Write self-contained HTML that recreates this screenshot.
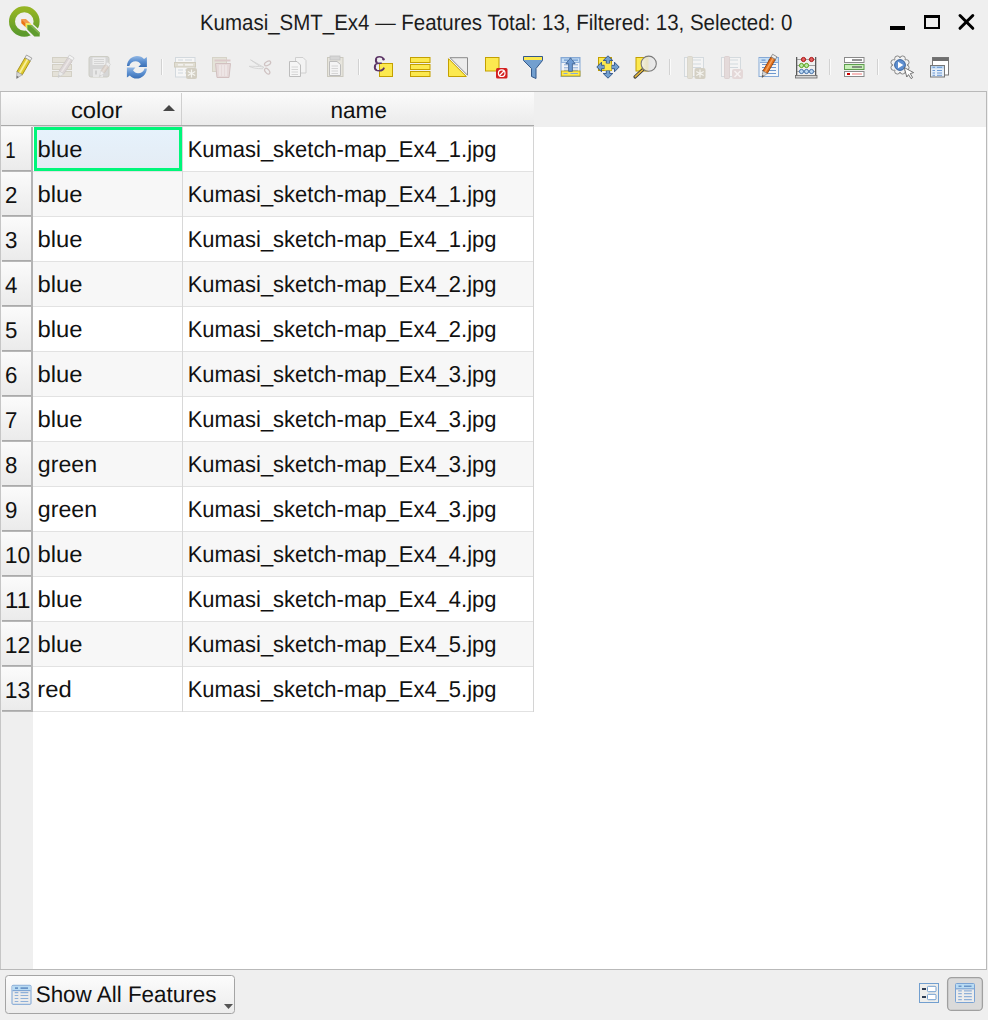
<!DOCTYPE html>
<html><head><meta charset="utf-8"><title>Attribute table</title>
<style>
html,body{margin:0;padding:0;background:#efefef;}
body{width:988px;height:1020px;overflow:hidden;}
svg{display:block;font-family:"Liberation Sans", sans-serif;text-rendering:geometricPrecision;}
</style></head><body>
<svg width="988" height="1020" viewBox="0 0 988 1020">
<rect width="988" height="1020" fill="#efefef"/>

<defs>
<linearGradient id="lg_ring" x1="0" y1="0" x2="0" y2="1"><stop offset="0" stop-color="#95b524"/><stop offset="1" stop-color="#5c9a2c"/></linearGradient>
<linearGradient id="lg_bar" x1="0" y1="0" x2="1" y2="1"><stop offset="0" stop-color="#86b850"/><stop offset="1" stop-color="#5e9a2f"/></linearGradient>
<linearGradient id="hdr" x1="0" y1="0" x2="0" y2="1"><stop offset="0" stop-color="#fbfbfb"/><stop offset="1" stop-color="#ebebeb"/></linearGradient>
<linearGradient id="btn" x1="0" y1="0" x2="0" y2="1"><stop offset="0" stop-color="#fcfcfc"/><stop offset="1" stop-color="#ececec"/></linearGradient>
<linearGradient id="sel" x1="0" y1="0" x2="0" y2="1"><stop offset="0" stop-color="#e6f2fc"/><stop offset="1" stop-color="#e4ecf4"/></linearGradient>
</defs>
<g>
<circle cx="24.3" cy="21.5" r="12.3" fill="none" stroke="url(#lg_ring)" stroke-width="6"/>
<polygon points="25.8,30.2 26,23.5 32.4,23.5 41.5,31.8 41.5,38.5 33.6,38.5" fill="#efefef"/>
<polygon points="21.3,19 25.9,19 30.5,23.2 25.7,23.2" fill="#f29a4a"/>
<polygon points="21.3,19 25.7,23.2 25.7,27.2 21.3,23.2" fill="#ea7414"/>
<polygon points="25.7,23.2 30.5,23.2 31.8,25 27.3,25 27.3,29.2 25.7,27.2" fill="#eee84e"/>
<polygon points="27.3,25 31.8,25 39.7,32.4 39.7,36.6 34.4,36.6 27.3,29.5" fill="#5f9c2e"/>
<polygon points="27.3,25 31.8,25 39.7,32.4 39.7,34.5 30,25.8" fill="#80b34e"/>
</g>

<text x="199.97" y="30" font-size="22.2" textLength="592.36" lengthAdjust="spacingAndGlyphs" fill="#1c1c1c">Kumasi_SMT_Ex4 — Features Total: 13, Filtered: 13, Selected: 0</text>
<rect x="890" y="26" width="15" height="4" fill="#000"/>
<path d="M925 16 H939 V28 H925 Z" fill="none" stroke="#000" stroke-width="2"/><rect x="924" y="15" width="16" height="3" fill="#000"/>
<path d="M960 15.5 L972.8 28.3 M972.8 15.5 L960 28.3" stroke="#000" stroke-width="3" stroke-linecap="round"/>
<g transform="translate(22.9,67.5) rotate(30)" opacity="1">
<rect x="-3.1" y="-9.6" width="6.2" height="16.2" fill="#e0cb30" stroke="#a08a10" stroke-width="0.8"/>
<rect x="-1.0333333333333334" y="-9.6" width="1.8599999999999999" height="16.2" fill="#f7ef9a"/>
<rect x="-3.1" y="-12.6" width="6.2" height="3" fill="#f0f0f0" stroke="#9a9a9a" stroke-width="0.8"/>
<polygon points="-3.1,6.6 3.1,6.6 0,12.6" fill="#d8d8d8" stroke="#9a9a9a" stroke-width="0.6"/>
<polygon points="-1.24,10.2 1.24,10.2 0,12.6" fill="#6f6f6f"/>
</g>
<rect x="52.5" y="57.5" width="19" height="5.0" fill="#e4e1d8" stroke="#d3d0c5"/>
<rect x="52.5" y="64.5" width="19" height="5.0" fill="#e4e1d8" stroke="#d3d0c5"/>
<rect x="52.5" y="71.5" width="19" height="5.0" fill="#e4e1d8" stroke="#d3d0c5"/>
<g transform="translate(65,67) rotate(33)" opacity="1">
<rect x="-2.75" y="-9.5" width="5.5" height="16.0" fill="#dcd6d6" stroke="#cfc8c8" stroke-width="0.8"/>
<rect x="-0.9166666666666666" y="-9.5" width="1.65" height="16.0" fill="#ebe6e6"/>
<rect x="-2.75" y="-12.5" width="5.5" height="3" fill="#f4f4f4" stroke="#d0d0d0" stroke-width="0.8"/>
<polygon points="-2.75,6.5 2.75,6.5 0,12.5" fill="#ececec" stroke="#d0d0d0" stroke-width="0.6"/>
<polygon points="-1.1,10.1 1.1,10.1 0,12.5" fill="#c8c8c8"/>
</g>
<rect x="89" y="56.5" width="20" height="20.5" rx="2" fill="#d6d6d6" stroke="#cdcdc4"/>
<rect x="92.5" y="57.5" width="13" height="7.5" fill="#ececec"/>
<path d="M94 59.5H104M94 61.5H104M94 63.5H104" stroke="#cfcfcf" stroke-width="0.8"/>
<rect x="93" y="69" width="10" height="8" fill="#e8e8e8"/><rect x="95" y="70.5" width="2" height="4" fill="#cfcfcf"/>
<g transform="translate(104,70) rotate(35)" opacity="1">
<rect x="-2.0" y="-5.5" width="4" height="8.0" fill="#dcd3cc" stroke="#d0c6be" stroke-width="0.8"/>
<rect x="-0.6666666666666666" y="-5.5" width="1.2" height="8.0" fill="#e6ded8"/>
<rect x="-2.0" y="-8.5" width="4" height="3" fill="#eee" stroke="#d6d6d6" stroke-width="0.8"/>
<polygon points="-2.0,2.5 2.0,2.5 0,8.5" fill="#eee" stroke="#d6d6d6" stroke-width="0.6"/>
<polygon points="-0.8,6.1 0.8,6.1 0,8.5" fill="#d0d0d0"/>
</g>
<defs><linearGradient id="rl" x1="0" y1="0" x2="0" y2="1"><stop offset="0" stop-color="#93b8e4"/><stop offset="0.5" stop-color="#5b8fd0"/><stop offset="1" stop-color="#3a6fb5"/></linearGradient></defs>
<g transform="translate(122,52)" fill="url(#rl)">
<path d="M4.9,14 C5.3,7.5 10.5,3.9 15,3.9 C18,3.9 20.5,5 22,7 L24.9,5 L24.9,14.9 L16.4,14.9 L18.8,12.2 C17.5,10.2 15.8,9.2 13.8,9.2 C10.5,9.2 8,11 7.3,14 Z"/>
<path d="M24.9,16.4 C24.5,22.9 19.3,26.5 14.8,26.5 C11.8,26.5 9.3,25.4 7.8,23.4 L4.9,25.4 L4.9,15.5 L13.4,15.5 L11,18.2 C12.3,20.2 14,21.2 16,21.2 C19.3,21.2 21.8,19.4 22.5,16.4 Z"/>
</g>
<rect x="161" y="59" width="1" height="16" fill="#d2d2d2" shape-rendering="crispEdges"/><rect x="162" y="59" width="1" height="16" fill="#fbfbfb" shape-rendering="crispEdges"/>
<rect x="175.5" y="57.5" width="19.5" height="19.5" fill="#f6f6f6" stroke="#d3d9de"/>
<path d="M178 60H183M185 60H192M178 70H183M185 70H191M178 73H183M185 73H191" stroke="#d0d8de" stroke-width="1.2"/>
<rect x="174.5" y="62.5" width="21" height="4.5" fill="#e0ddd2" stroke="#d0ccbe"/>
<path d="M178 64.8H183M185 64.8H193" stroke="#f8f8f8" stroke-width="1.2"/>
<rect x="186" y="68" width="11" height="11" rx="2" fill="#d2cec2"/>
<path d="M191.5 69.5V77.5M187.8 71.5L195.2 75.5M195.2 71.5L187.8 75.5" stroke="#f4f4f0" stroke-width="1.2"/>
<rect x="212.5" y="57.5" width="14" height="14" fill="#e4e2d8" stroke="#d6d3c8"/>
<rect x="214.5" y="59.5" width="16" height="2" fill="#dcc9c9"/>
<path d="M215.5 63.5H230.5L229 77.5H217Z" fill="#e6dada" stroke="#d2c0c0"/>
<path d="M220 65V76M223 65V76M226 65V76" stroke="#f1ecec" stroke-width="1.3"/>
<path d="M250.5 59.8 L263.5 67.2 L262.5 68.2 Z" fill="#f2f2f2" stroke="#d2d2d2" stroke-width="0.9" stroke-linejoin="round"/>
<path d="M249.2 66.3 C253 66.3 258 66.3 263.5 67 L262.5 68.8 C257 68.6 252 68 249.2 66.3 Z" fill="#f2f2f2" stroke="#d2d2d2" stroke-width="0.9" stroke-linejoin="round"/>
<ellipse cx="267.6" cy="63.4" rx="3.4" ry="1.9" transform="rotate(-30 267.6 63.4)" fill="none" stroke="#cfc2c2" stroke-width="1.2"/>
<ellipse cx="267.2" cy="71.2" rx="3.4" ry="1.9" transform="rotate(50 267.2 71.2)" fill="none" stroke="#cfc2c2" stroke-width="1.2"/>
<path d="M295.5 57.5H303L306 60.5V73H295.5Z" fill="#f3f3f3" stroke="#cfcfcf"/>
<path d="M289.5 61.5H297L300.5 65V76.5H289.5Z" fill="#f5f5f5" stroke="#bdbdbd"/>
<path d="M291.5 67H298M291.5 69.5H298M291.5 72H298M291.5 74.5H298" stroke="#cdcdcd" stroke-width="0.8"/>
<rect x="327.5" y="57.5" width="15.5" height="19" fill="#e7e5dd" stroke="#cbc9bf"/>
<rect x="330" y="56" width="10" height="4" fill="#d6d6d6" stroke="#c4c4c4" stroke-width="0.8"/>
<path d="M329.5 61.5H337L340.5 64.5V75.5H329.5Z" fill="#f4f4f4" stroke="#bcbcbc"/>
<path d="M331.5 66H338M331.5 68.5H338M331.5 71H338M331.5 73.5H338" stroke="#cdcdcd" stroke-width="0.8"/>
<rect x="358" y="59" width="1" height="16" fill="#d2d2d2" shape-rendering="crispEdges"/><rect x="359" y="59" width="1" height="16" fill="#fbfbfb" shape-rendering="crispEdges"/>
<rect x="379.5" y="63.5" width="13" height="13" fill="#fce94f" stroke="#c4a000"/>
<path d="M383.6 59.2 C382.8 57.4 381.2 56.8 379.6 56.8 C377 56.8 375.7 58.5 375.7 60.4 C375.7 62.3 377.2 63.3 379.2 63.3 L381.8 63.3 M379.2 63.3 C376.2 63.3 374.6 65.1 374.6 67.2 C374.6 69.6 376.7 70.8 379.4 70.8 C381.7 70.8 383.4 69.7 384.2 67.6" fill="none" stroke="#5c3566" stroke-width="1.6"/>
<path d="M376.6 58.6 C375.9 59.6 375.9 61.4 377 62.4 M375.6 65.2 C374.8 66.6 375 68.8 376.4 69.8" fill="none" stroke="#5c3566" stroke-width="1.6"/>
<circle cx="383.5" cy="59.2" r="1.2" fill="#5c3566"/>
<rect x="410.5" y="57.5" width="19.5" height="5.0" fill="#fce94f" stroke="#c4a000"/>
<rect x="410.5" y="64.5" width="19.5" height="5.0" fill="#fce94f" stroke="#c4a000"/>
<rect x="410.5" y="71.5" width="19.5" height="5.0" fill="#fce94f" stroke="#c4a000"/>
<polygon points="450,57.7 467.5,57.7 467.5,75.2" fill="#ececec" stroke="#8a8a8a" stroke-linejoin="round"/>
<polygon points="448.5,58.7 448.5,76.5 466.3,76.5" fill="#fce94f" stroke="#c4a000" stroke-linejoin="round"/>
<rect x="485.5" y="57.5" width="13.5" height="13.5" fill="#fce94f" stroke="#c4a000"/>
<rect x="496" y="68" width="11.5" height="10.5" rx="1.5" fill="#d42020"/>
<circle cx="501.7" cy="73.2" r="3.3" fill="none" stroke="#fff" stroke-width="1.2"/><path d="M499.5 75.5L504 71" stroke="#fff" stroke-width="1.2"/>
<path d="M523.5 56.5H542.5V60.5L536 68.5V78.5L531.5 76.5V68.5L523.5 60.5Z" fill="#729fcf" stroke="#34598a" stroke-width="1"/>
<rect x="524" y="57" width="18" height="3" fill="#fce94f"/>
<rect x="561" y="57.5" width="19" height="19" fill="#f2f4f7" stroke="#86a9d6"/>
<rect x="561.5" y="58" width="18" height="4.5" fill="#c6dff5" stroke="#86a9d6" stroke-width="0.8"/>
<path d="M564 60.2H568M573 60.2H578" stroke="#6d98cf" stroke-width="1.3"/>
<path d="M564 64.8H568M573 64.8H578M564 67.8H568M573 67.8H578M564 70.3H568M573 70.3H578" stroke="#86a9d6" stroke-width="1"/>
<rect x="561.5" y="71" width="18.5" height="5" fill="#fce94f" stroke="#c4a000" stroke-width="0.8"/>
<path d="M563.5 73.5H567.5M570.5 73.5H578" stroke="#86a9d6" stroke-width="1"/>
<path d="M570.5 57.8L575.1 63.7H572.4V71.3H568.6V63.7H565.9Z" fill="#6d9ad2" stroke="#34598a" stroke-width="0.8" stroke-linejoin="round"/>
<rect x="598.5" y="57.5" width="13" height="13" fill="#fce94f" stroke="#c4a000"/>
<polygon points="608,55.8 612.8,60.5 609.7,60.5 609.7,63.6 606.3,63.6 606.3,60.5 603.2,60.5" fill="#729fcf" stroke="#2d5186" stroke-width="0.9" stroke-linejoin="round"/>
<polygon points="608,78.2 612.8,73.5 609.7,73.5 609.7,70.4 606.3,70.4 606.3,73.5 603.2,73.5" fill="#729fcf" stroke="#2d5186" stroke-width="0.9" stroke-linejoin="round"/>
<polygon points="596.8,67 601.5,62.2 601.5,65.3 604.6,65.3 604.6,68.7 601.5,68.7 601.5,71.8" fill="#729fcf" stroke="#2d5186" stroke-width="0.9" stroke-linejoin="round"/>
<polygon points="619.2,67 614.5,62.2 614.5,65.3 611.4,65.3 611.4,68.7 614.5,68.7 614.5,71.8" fill="#729fcf" stroke="#2d5186" stroke-width="0.9" stroke-linejoin="round"/>
<rect x="604.6" y="63.6" width="6.8" height="6.8" fill="#fce94f"/>
<rect x="636" y="57.5" width="12" height="13.5" fill="#fce94f" stroke="#c4a000"/>
<path d="M643 69.5L635 77" stroke="#3a3a3a" stroke-width="3.2" stroke-linecap="round"/><path d="M642.5 70L635.3 76.7" stroke="#e6b83c" stroke-width="1.6" stroke-linecap="round"/>
<defs><linearGradient id="mg" x1="0" y1="0" x2="1" y2="0"><stop offset="0" stop-color="#f3f1e4"/><stop offset="0.4" stop-color="#e8e2c4"/><stop offset="0.55" stop-color="#e6e6e6"/><stop offset="1" stop-color="#ebebeb"/></linearGradient></defs>
<circle cx="648.7" cy="63.7" r="7.6" fill="url(#mg)" stroke="#7a7a7a" stroke-width="1.1"/>
<rect x="669" y="59" width="1" height="16" fill="#d2d2d2" shape-rendering="crispEdges"/><rect x="670" y="59" width="1" height="16" fill="#fbfbfb" shape-rendering="crispEdges"/>
<rect x="684.5" y="57.5" width="19" height="19" fill="#f4f4f4" stroke="#d4dade"/>
<path d="M693 60H701M693 64H701M693 67.5H701" stroke="#d2d9de" stroke-width="1.2"/>
<rect x="687.5" y="56.5" width="5" height="22" rx="1" fill="#e2dfd4" stroke="#d6d2c6" stroke-width="0.8"/>
<rect x="694.5" y="68" width="11" height="11" rx="2" fill="#d4d0c4"/>
<path d="M700 69.5V77.5M696.3 71.5L703.7 75.5M703.7 71.5L696.3 75.5" stroke="#f4f4f0" stroke-width="1.2"/>
<rect x="721.5" y="57.5" width="19" height="19" fill="#f4f4f4" stroke="#d4dade"/>
<path d="M730 60H738M730 64H738M730 67.5H738" stroke="#d2d9de" stroke-width="1.2"/>
<rect x="724.5" y="56.5" width="5" height="22" rx="1" fill="#e4dada" stroke="#d8cccc" stroke-width="0.8"/>
<rect x="732" y="69" width="11" height="10" rx="2" fill="#e4d8d8"/>
<path d="M734.5 71L740.5 77M740.5 71L734.5 77" stroke="#f6f2f2" stroke-width="1.5"/>
<rect x="759" y="57.5" width="19.5" height="19" fill="#f4f6f8" stroke="#86a9d6"/>
<rect x="759.5" y="58" width="18.5" height="4" fill="#c6dff5"/>
<path d="M760 62.5H778" stroke="#86a9d6" stroke-width="1"/>
<path d="M761.5 60.2H765.5M768 60.2H776" stroke="#6d98cf" stroke-width="1.3"/>
<path d="M762 64.5H776M762 67.5H776M762 70.5H776M762 73.5H776" stroke="#6d98cf" stroke-width="1"/>
<g transform="translate(768.4,66.5) rotate(30)" opacity="1">
<rect x="-2.5" y="-9.7" width="5" height="16.4" fill="#e2701c" stroke="#8f3f08" stroke-width="0.8"/>
<rect x="-0.8333333333333334" y="-9.7" width="1.5" height="16.4" fill="#f7a055"/>
<rect x="-2.5" y="-12.7" width="5" height="3" fill="#eeeeee" stroke="#888" stroke-width="0.8"/>
<polygon points="-2.5,6.699999999999999 2.5,6.699999999999999 0,12.7" fill="#d8d8d8" stroke="#888" stroke-width="0.6"/>
<polygon points="-1.0,10.299999999999999 1.0,10.299999999999999 0,12.7" fill="#444"/>
</g>
<rect x="796" y="57" width="1.3" height="19" fill="#5a5a5a"/><rect x="815" y="57" width="1.3" height="19" fill="#5a5a5a"/>
<rect x="795.5" y="75.5" width="21.5" height="2.5" fill="#d4d4d4" stroke="#6a6a6a" stroke-width="0.8"/>
<path d="M797 59.5H815M797 65.5H815M797 71.5H815" stroke="#8a8a8a" stroke-width="0.8"/>
<circle cx="803.5" cy="59.5" r="2.1" fill="#e06060" stroke="#a40000" stroke-width="0.9"/>
<circle cx="811.5" cy="59.5" r="2.1" fill="#e06060" stroke="#a40000" stroke-width="0.9"/>
<circle cx="801.5" cy="65.5" r="2.1" fill="#b8eaa8" stroke="#4e9a06" stroke-width="0.9"/>
<circle cx="806.5" cy="65.5" r="2.1" fill="#b8eaa8" stroke="#4e9a06" stroke-width="0.9"/>
<circle cx="801.5" cy="71.5" r="2.1" fill="#bcd8f2" stroke="#3465a4" stroke-width="0.9"/>
<circle cx="806.5" cy="71.5" r="2.1" fill="#bcd8f2" stroke="#3465a4" stroke-width="0.9"/>
<circle cx="811.5" cy="71.5" r="2.1" fill="#bcd8f2" stroke="#3465a4" stroke-width="0.9"/>
<rect x="829" y="59" width="1" height="16" fill="#d2d2d2" shape-rendering="crispEdges"/><rect x="830" y="59" width="1" height="16" fill="#fbfbfb" shape-rendering="crispEdges"/>
<rect x="844.5" y="57.5" width="19.5" height="5" fill="#fff" stroke="#8a8a8a"/><path d="M852 60H862" stroke="#666" stroke-width="1.4"/>
<rect x="844.5" y="64.5" width="19.5" height="5" fill="#c8f0b8" stroke="#5e9e4e"/><path d="M852 67H862" stroke="#666" stroke-width="1.4"/>
<rect x="844.5" y="71.5" width="19.5" height="5" fill="#fff" stroke="#8a8a8a"/><rect x="847" y="73" width="3" height="2" fill="#c00"/><path d="M852 74H862" stroke="#f4a0a0" stroke-width="1.4"/>
<rect x="877" y="59" width="1" height="16" fill="#d2d2d2" shape-rendering="crispEdges"/><rect x="878" y="59" width="1" height="16" fill="#fbfbfb" shape-rendering="crispEdges"/>
<circle cx="906.37" cy="67.64" r="2.7" fill="#f2f2f2" stroke="#7a7a7a" stroke-width="0.9"/><circle cx="902.64" cy="71.37" r="2.7" fill="#f2f2f2" stroke="#7a7a7a" stroke-width="0.9"/><circle cx="897.36" cy="71.37" r="2.7" fill="#f2f2f2" stroke="#7a7a7a" stroke-width="0.9"/><circle cx="893.63" cy="67.64" r="2.7" fill="#f2f2f2" stroke="#7a7a7a" stroke-width="0.9"/><circle cx="893.63" cy="62.36" r="2.7" fill="#f2f2f2" stroke="#7a7a7a" stroke-width="0.9"/><circle cx="897.36" cy="58.63" r="2.7" fill="#f2f2f2" stroke="#7a7a7a" stroke-width="0.9"/><circle cx="902.64" cy="58.63" r="2.7" fill="#f2f2f2" stroke="#7a7a7a" stroke-width="0.9"/><circle cx="906.37" cy="62.36" r="2.7" fill="#f2f2f2" stroke="#7a7a7a" stroke-width="0.9"/>
<circle cx="900" cy="65" r="7" fill="#f2f2f2"/>
<circle cx="900" cy="65" r="5.4" fill="#5f8fd0" stroke="#2f5a95" stroke-width="0.9"/>
<polygon points="898,61.8 898,68.2 903.3,65" fill="#fff"/>
<path d="M904.2 67.5 L906.8 77 L908.5 74.6 L911 78.6 L912.6 77.6 L910.3 73.6 L913.6 72.6 Z" fill="#fff" stroke="#555" stroke-width="0.8" stroke-linejoin="round"/>
<rect x="932.5" y="57.5" width="16" height="17.5" fill="#fff" stroke="#7a7a7a"/>
<rect x="932.5" y="57.5" width="16" height="3.5" fill="#6f6f6f"/>
<rect x="930.5" y="65.5" width="14" height="11.5" fill="#e4eef9" stroke="#777"/>
<rect x="931" y="66" width="13" height="2.5" fill="#bcd6f0"/>
<path d="M932.5 67.3H935M937 67.3H942M932.5 70.5H935M937 70.5H942M932.5 73H935M937 73H942M932.5 75.3H935M937 75.3H942" stroke="#5d8fcf" stroke-width="0.9"/>
<rect x="0.5" y="91.5" width="986" height="878" fill="#fff" stroke="#b9b9b9" shape-rendering="crispEdges"/><rect x="0" y="92" width="1" height="877" fill="#c6c6c6" shape-rendering="crispEdges"/>
<rect x="1" y="92" width="985" height="34" fill="#efefef" shape-rendering="crispEdges"/>
<rect x="1" y="92" width="533" height="33" fill="url(#hdr)" shape-rendering="crispEdges"/>
<rect x="1" y="125" width="533" height="1" fill="#a9a9a9" shape-rendering="crispEdges"/>
<rect x="1" y="126" width="533" height="1" fill="#d8d8d8" shape-rendering="crispEdges"/>
<rect x="181" y="93" width="1" height="32" fill="#cfcfcf" shape-rendering="crispEdges"/>
<polygon points="163,111 175,111 169,105" fill="#474747"/>
<text x="70.93" y="118" font-size="23" fill="#111" textLength="51.62" lengthAdjust="spacingAndGlyphs">color</text>
<text x="330.56" y="118" font-size="23" fill="#111" textLength="56.39" lengthAdjust="spacingAndGlyphs">name</text>
<rect x="1" y="126" width="32" height="843" fill="#efefef" shape-rendering="crispEdges"/>
<rect x="534" y="92" width="452" height="35" fill="#efefef" shape-rendering="crispEdges"/>
<rect x="33" y="127" width="500" height="45" fill="#ffffff" shape-rendering="crispEdges"/>
<rect x="1" y="127" width="31" height="43" fill="url(#hdr)" shape-rendering="crispEdges"/>
<rect x="2" y="170" width="31" height="1" fill="#aaaaaa" shape-rendering="crispEdges"/>
<rect x="2" y="171" width="31" height="1" fill="#b8b8b8" shape-rendering="crispEdges"/>
<rect x="31" y="127" width="2" height="45" fill="#b4b4b4" shape-rendering="crispEdges"/>
<rect x="33" y="171" width="500" height="1" fill="#e2e2e2" shape-rendering="crispEdges"/>
<text x="5.18" y="158" font-size="23" fill="#111" textLength="10.39" lengthAdjust="spacingAndGlyphs">1</text>
<text x="187.71" y="157" font-size="23" fill="#111" textLength="308.74" lengthAdjust="spacingAndGlyphs">Kumasi_sketch-map_Ex4_1.jpg</text>
<rect x="33" y="172" width="500" height="45" fill="#f7f7f7" shape-rendering="crispEdges"/>
<rect x="1" y="172" width="31" height="43" fill="url(#hdr)" shape-rendering="crispEdges"/>
<rect x="2" y="215" width="31" height="1" fill="#aaaaaa" shape-rendering="crispEdges"/>
<rect x="2" y="216" width="31" height="1" fill="#b8b8b8" shape-rendering="crispEdges"/>
<rect x="31" y="172" width="2" height="45" fill="#b4b4b4" shape-rendering="crispEdges"/>
<rect x="33" y="216" width="500" height="1" fill="#e2e2e2" shape-rendering="crispEdges"/>
<text x="5.0" y="203" font-size="23" fill="#111" textLength="12.4" lengthAdjust="spacingAndGlyphs">2</text>
<text x="37.42" y="202" font-size="23" fill="#111" textLength="45.02" lengthAdjust="spacingAndGlyphs">blue</text>
<text x="187.71" y="202" font-size="23" fill="#111" textLength="308.74" lengthAdjust="spacingAndGlyphs">Kumasi_sketch-map_Ex4_1.jpg</text>
<rect x="33" y="217" width="500" height="45" fill="#ffffff" shape-rendering="crispEdges"/>
<rect x="1" y="217" width="31" height="43" fill="url(#hdr)" shape-rendering="crispEdges"/>
<rect x="2" y="260" width="31" height="1" fill="#aaaaaa" shape-rendering="crispEdges"/>
<rect x="2" y="261" width="31" height="1" fill="#b8b8b8" shape-rendering="crispEdges"/>
<rect x="31" y="217" width="2" height="45" fill="#b4b4b4" shape-rendering="crispEdges"/>
<rect x="33" y="261" width="500" height="1" fill="#e2e2e2" shape-rendering="crispEdges"/>
<text x="5.0" y="248" font-size="23" fill="#111" textLength="12.4" lengthAdjust="spacingAndGlyphs">3</text>
<text x="37.42" y="247" font-size="23" fill="#111" textLength="45.02" lengthAdjust="spacingAndGlyphs">blue</text>
<text x="187.71" y="247" font-size="23" fill="#111" textLength="308.74" lengthAdjust="spacingAndGlyphs">Kumasi_sketch-map_Ex4_1.jpg</text>
<rect x="33" y="262" width="500" height="45" fill="#f7f7f7" shape-rendering="crispEdges"/>
<rect x="1" y="262" width="31" height="43" fill="url(#hdr)" shape-rendering="crispEdges"/>
<rect x="2" y="305" width="31" height="1" fill="#aaaaaa" shape-rendering="crispEdges"/>
<rect x="2" y="306" width="31" height="1" fill="#b8b8b8" shape-rendering="crispEdges"/>
<rect x="31" y="262" width="2" height="45" fill="#b4b4b4" shape-rendering="crispEdges"/>
<rect x="33" y="306" width="500" height="1" fill="#e2e2e2" shape-rendering="crispEdges"/>
<text x="5.0" y="293" font-size="23" fill="#111" textLength="12.4" lengthAdjust="spacingAndGlyphs">4</text>
<text x="37.42" y="292" font-size="23" fill="#111" textLength="45.02" lengthAdjust="spacingAndGlyphs">blue</text>
<text x="187.71" y="292" font-size="23" fill="#111" textLength="308.74" lengthAdjust="spacingAndGlyphs">Kumasi_sketch-map_Ex4_2.jpg</text>
<rect x="33" y="307" width="500" height="45" fill="#ffffff" shape-rendering="crispEdges"/>
<rect x="1" y="307" width="31" height="43" fill="url(#hdr)" shape-rendering="crispEdges"/>
<rect x="2" y="350" width="31" height="1" fill="#aaaaaa" shape-rendering="crispEdges"/>
<rect x="2" y="351" width="31" height="1" fill="#b8b8b8" shape-rendering="crispEdges"/>
<rect x="31" y="307" width="2" height="45" fill="#b4b4b4" shape-rendering="crispEdges"/>
<rect x="33" y="351" width="500" height="1" fill="#e2e2e2" shape-rendering="crispEdges"/>
<text x="5.0" y="338" font-size="23" fill="#111" textLength="12.4" lengthAdjust="spacingAndGlyphs">5</text>
<text x="37.42" y="337" font-size="23" fill="#111" textLength="45.02" lengthAdjust="spacingAndGlyphs">blue</text>
<text x="187.71" y="337" font-size="23" fill="#111" textLength="308.74" lengthAdjust="spacingAndGlyphs">Kumasi_sketch-map_Ex4_2.jpg</text>
<rect x="33" y="352" width="500" height="45" fill="#f7f7f7" shape-rendering="crispEdges"/>
<rect x="1" y="352" width="31" height="43" fill="url(#hdr)" shape-rendering="crispEdges"/>
<rect x="2" y="395" width="31" height="1" fill="#aaaaaa" shape-rendering="crispEdges"/>
<rect x="2" y="396" width="31" height="1" fill="#b8b8b8" shape-rendering="crispEdges"/>
<rect x="31" y="352" width="2" height="45" fill="#b4b4b4" shape-rendering="crispEdges"/>
<rect x="33" y="396" width="500" height="1" fill="#e2e2e2" shape-rendering="crispEdges"/>
<text x="5.0" y="383" font-size="23" fill="#111" textLength="12.4" lengthAdjust="spacingAndGlyphs">6</text>
<text x="37.42" y="382" font-size="23" fill="#111" textLength="45.02" lengthAdjust="spacingAndGlyphs">blue</text>
<text x="187.71" y="382" font-size="23" fill="#111" textLength="308.74" lengthAdjust="spacingAndGlyphs">Kumasi_sketch-map_Ex4_3.jpg</text>
<rect x="33" y="397" width="500" height="45" fill="#ffffff" shape-rendering="crispEdges"/>
<rect x="1" y="397" width="31" height="43" fill="url(#hdr)" shape-rendering="crispEdges"/>
<rect x="2" y="440" width="31" height="1" fill="#aaaaaa" shape-rendering="crispEdges"/>
<rect x="2" y="441" width="31" height="1" fill="#b8b8b8" shape-rendering="crispEdges"/>
<rect x="31" y="397" width="2" height="45" fill="#b4b4b4" shape-rendering="crispEdges"/>
<rect x="33" y="441" width="500" height="1" fill="#e2e2e2" shape-rendering="crispEdges"/>
<text x="5.0" y="428" font-size="23" fill="#111" textLength="12.4" lengthAdjust="spacingAndGlyphs">7</text>
<text x="37.42" y="427" font-size="23" fill="#111" textLength="45.02" lengthAdjust="spacingAndGlyphs">blue</text>
<text x="187.71" y="427" font-size="23" fill="#111" textLength="308.74" lengthAdjust="spacingAndGlyphs">Kumasi_sketch-map_Ex4_3.jpg</text>
<rect x="33" y="442" width="500" height="45" fill="#f7f7f7" shape-rendering="crispEdges"/>
<rect x="1" y="442" width="31" height="43" fill="url(#hdr)" shape-rendering="crispEdges"/>
<rect x="2" y="485" width="31" height="1" fill="#aaaaaa" shape-rendering="crispEdges"/>
<rect x="2" y="486" width="31" height="1" fill="#b8b8b8" shape-rendering="crispEdges"/>
<rect x="31" y="442" width="2" height="45" fill="#b4b4b4" shape-rendering="crispEdges"/>
<rect x="33" y="486" width="500" height="1" fill="#e2e2e2" shape-rendering="crispEdges"/>
<text x="5.0" y="473" font-size="23" fill="#111" textLength="12.4" lengthAdjust="spacingAndGlyphs">8</text>
<text x="37.88" y="472" font-size="23" fill="#111" textLength="59.17" lengthAdjust="spacingAndGlyphs">green</text>
<text x="187.71" y="472" font-size="23" fill="#111" textLength="308.74" lengthAdjust="spacingAndGlyphs">Kumasi_sketch-map_Ex4_3.jpg</text>
<rect x="33" y="487" width="500" height="45" fill="#ffffff" shape-rendering="crispEdges"/>
<rect x="1" y="487" width="31" height="43" fill="url(#hdr)" shape-rendering="crispEdges"/>
<rect x="2" y="530" width="31" height="1" fill="#aaaaaa" shape-rendering="crispEdges"/>
<rect x="2" y="531" width="31" height="1" fill="#b8b8b8" shape-rendering="crispEdges"/>
<rect x="31" y="487" width="2" height="45" fill="#b4b4b4" shape-rendering="crispEdges"/>
<rect x="33" y="531" width="500" height="1" fill="#e2e2e2" shape-rendering="crispEdges"/>
<text x="5.0" y="518" font-size="23" fill="#111" textLength="12.4" lengthAdjust="spacingAndGlyphs">9</text>
<text x="37.88" y="517" font-size="23" fill="#111" textLength="59.17" lengthAdjust="spacingAndGlyphs">green</text>
<text x="187.71" y="517" font-size="23" fill="#111" textLength="308.74" lengthAdjust="spacingAndGlyphs">Kumasi_sketch-map_Ex4_3.jpg</text>
<rect x="33" y="532" width="500" height="45" fill="#f7f7f7" shape-rendering="crispEdges"/>
<rect x="1" y="532" width="31" height="43" fill="url(#hdr)" shape-rendering="crispEdges"/>
<rect x="2" y="575" width="31" height="1" fill="#aaaaaa" shape-rendering="crispEdges"/>
<rect x="2" y="576" width="31" height="1" fill="#b8b8b8" shape-rendering="crispEdges"/>
<rect x="31" y="532" width="2" height="45" fill="#b4b4b4" shape-rendering="crispEdges"/>
<rect x="33" y="576" width="500" height="1" fill="#e2e2e2" shape-rendering="crispEdges"/>
<text x="4.86" y="563" font-size="23" fill="#111" textLength="25.5" lengthAdjust="spacingAndGlyphs">10</text>
<text x="37.42" y="562" font-size="23" fill="#111" textLength="45.02" lengthAdjust="spacingAndGlyphs">blue</text>
<text x="187.71" y="562" font-size="23" fill="#111" textLength="308.74" lengthAdjust="spacingAndGlyphs">Kumasi_sketch-map_Ex4_4.jpg</text>
<rect x="33" y="577" width="500" height="45" fill="#ffffff" shape-rendering="crispEdges"/>
<rect x="1" y="577" width="31" height="43" fill="url(#hdr)" shape-rendering="crispEdges"/>
<rect x="2" y="620" width="31" height="1" fill="#aaaaaa" shape-rendering="crispEdges"/>
<rect x="2" y="621" width="31" height="1" fill="#b8b8b8" shape-rendering="crispEdges"/>
<rect x="31" y="577" width="2" height="45" fill="#b4b4b4" shape-rendering="crispEdges"/>
<rect x="33" y="621" width="500" height="1" fill="#e2e2e2" shape-rendering="crispEdges"/>
<text x="4.86" y="608" font-size="23" fill="#111" textLength="25.5" lengthAdjust="spacingAndGlyphs">11</text>
<text x="37.42" y="607" font-size="23" fill="#111" textLength="45.02" lengthAdjust="spacingAndGlyphs">blue</text>
<text x="187.71" y="607" font-size="23" fill="#111" textLength="308.74" lengthAdjust="spacingAndGlyphs">Kumasi_sketch-map_Ex4_4.jpg</text>
<rect x="33" y="622" width="500" height="45" fill="#f7f7f7" shape-rendering="crispEdges"/>
<rect x="1" y="622" width="31" height="43" fill="url(#hdr)" shape-rendering="crispEdges"/>
<rect x="2" y="665" width="31" height="1" fill="#aaaaaa" shape-rendering="crispEdges"/>
<rect x="2" y="666" width="31" height="1" fill="#b8b8b8" shape-rendering="crispEdges"/>
<rect x="31" y="622" width="2" height="45" fill="#b4b4b4" shape-rendering="crispEdges"/>
<rect x="33" y="666" width="500" height="1" fill="#e2e2e2" shape-rendering="crispEdges"/>
<text x="4.86" y="653" font-size="23" fill="#111" textLength="25.5" lengthAdjust="spacingAndGlyphs">12</text>
<text x="37.42" y="652" font-size="23" fill="#111" textLength="45.02" lengthAdjust="spacingAndGlyphs">blue</text>
<text x="187.71" y="652" font-size="23" fill="#111" textLength="308.74" lengthAdjust="spacingAndGlyphs">Kumasi_sketch-map_Ex4_5.jpg</text>
<rect x="33" y="667" width="500" height="45" fill="#ffffff" shape-rendering="crispEdges"/>
<rect x="1" y="667" width="31" height="43" fill="url(#hdr)" shape-rendering="crispEdges"/>
<rect x="2" y="710" width="31" height="1" fill="#aaaaaa" shape-rendering="crispEdges"/>
<rect x="2" y="711" width="31" height="1" fill="#b8b8b8" shape-rendering="crispEdges"/>
<rect x="31" y="667" width="2" height="45" fill="#b4b4b4" shape-rendering="crispEdges"/>
<rect x="33" y="711" width="500" height="1" fill="#e2e2e2" shape-rendering="crispEdges"/>
<text x="4.86" y="698" font-size="23" fill="#111" textLength="25.5" lengthAdjust="spacingAndGlyphs">13</text>
<text x="37.37" y="697" font-size="23" fill="#111" textLength="34.42" lengthAdjust="spacingAndGlyphs">red</text>
<text x="187.71" y="697" font-size="23" fill="#111" textLength="308.74" lengthAdjust="spacingAndGlyphs">Kumasi_sketch-map_Ex4_5.jpg</text>
<rect x="182" y="126" width="1" height="586" fill="#d8d8d8" shape-rendering="crispEdges"/>
<rect x="533" y="126" width="1" height="586" fill="#d4d4d4" shape-rendering="crispEdges"/>
<rect x="35" y="128.5" width="145.5" height="41" fill="url(#sel)" stroke="#00f67a" stroke-width="3" shape-rendering="crispEdges"/>
<text x="37.42" y="157" font-size="23" fill="#111" textLength="45.02" lengthAdjust="spacingAndGlyphs">blue</text>
<rect x="5.5" y="975.5" width="229" height="38" rx="3" fill="url(#btn)" stroke="#a4a4a4"/>
<g transform="translate(11.5,984.8) scale(1.0)">
<rect x="0.5" y="0.5" width="19" height="19" rx="1" fill="#ececec" stroke="#7aa3d4"/>
<rect x="1" y="1" width="18" height="4.8" fill="#b9dbf3"/>
<path d="M1 5.8H19" stroke="#7fa5d4" stroke-width="1.2"/>
<path d="M3.5 3.3H6.5M9 3.3H16.5" stroke="#6a95c8" stroke-width="1.6"/>
<path d="M3.2 7.8H6.8M9 7.8H16.8M3.2 10.7H6.8M9 10.7H16.8M3.2 13.7H6.8M9 13.7H16.8M3.2 16.7H6.8M9 16.7H16.8" stroke="#8fb0d8" stroke-width="1.2"/>
</g>
<g transform="translate(919,983)">
<rect x="0.5" y="0.5" width="19" height="19" fill="#eeeeec" stroke="#729fcf"/>
<path d="M3 6H7M3 14H7" stroke="#2e3d54" stroke-width="1.8"/>
<rect x="8.5" y="3.3" width="8.5" height="5.4" rx="1" fill="#fff" stroke="#729fcf"/>
<rect x="8.5" y="11.3" width="8.5" height="5.4" rx="1" fill="#fff" stroke="#729fcf"/>
</g>
<text x="35.69" y="1002.4" font-size="22.6" fill="#111" textLength="180.69" lengthAdjust="spacingAndGlyphs">Show All Features</text>
<polygon points="224,1004 233,1004 228.5,1009" fill="#555"/>
<rect x="947.6" y="977.6" width="34.8" height="32.8" rx="4" fill="#dadada" stroke="#a0a0a0" stroke-width="1.3"/>
<g transform="translate(955,983) scale(1.0)">
<rect x="0.5" y="0.5" width="19" height="19" rx="1" fill="#ececec" stroke="#7aa3d4"/>
<rect x="1" y="1" width="18" height="4.8" fill="#b9dbf3"/>
<path d="M1 5.8H19" stroke="#7fa5d4" stroke-width="1.2"/>
<path d="M3.5 3.3H6.5M9 3.3H16.5" stroke="#6a95c8" stroke-width="1.6"/>
<path d="M3.2 7.8H6.8M9 7.8H16.8M3.2 10.7H6.8M9 10.7H16.8M3.2 13.7H6.8M9 13.7H16.8M3.2 16.7H6.8M9 16.7H16.8" stroke="#8fb0d8" stroke-width="1.2"/>
</g>
</svg>
</body></html>
